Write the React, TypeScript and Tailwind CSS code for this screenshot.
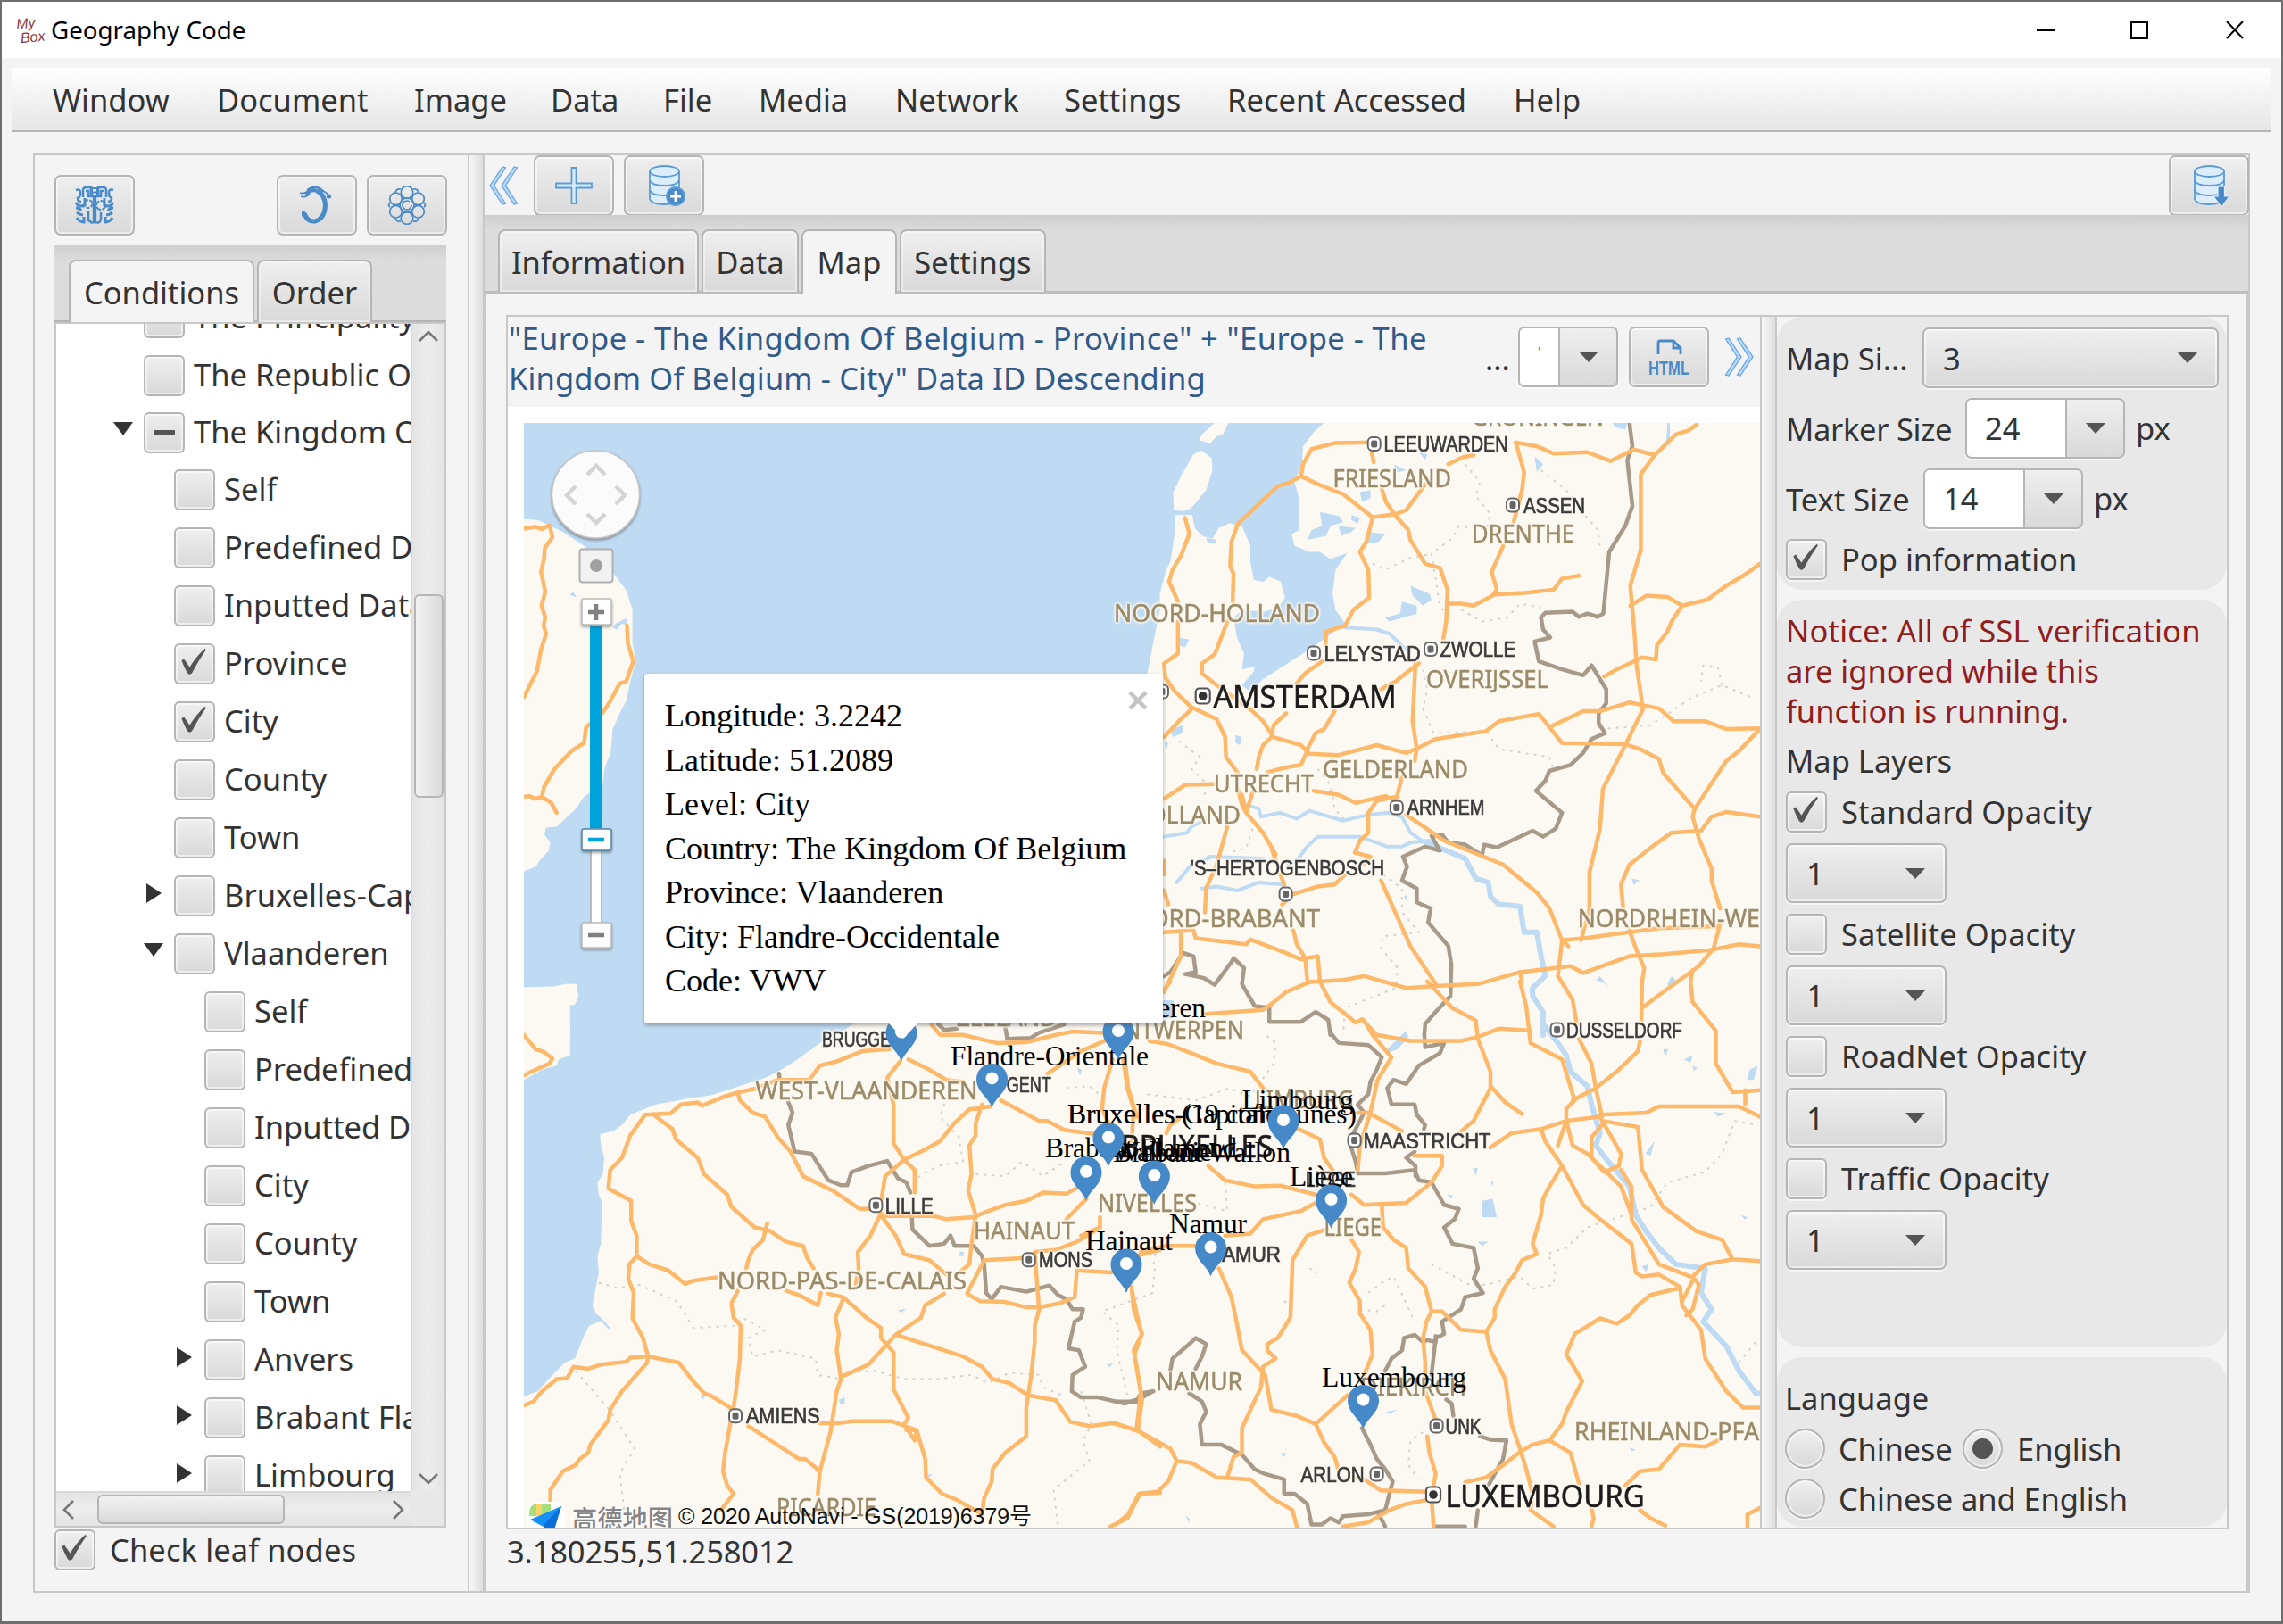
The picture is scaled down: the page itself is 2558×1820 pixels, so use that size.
import type { ReactNode } from "react";

const UI = "font-['Noto_Sans','Open_Sans',sans-serif]";
const FACE = "bg-linear-to-b from-[#efefef] to-[#d9d9d9] border-2 border-[#b5b5b5] shadow-[inset_0_0_0_2px_rgba(255,255,255,0.55),0_2px_0_rgba(255,255,255,0.6)]";

function Tick() {
  return (
    <svg viewBox="0 0 46 46" className="h-full w-full">
      <path d="M9 19 L12 17 L19 27 C25 17 31 10 38 4 L39 6 C33 14 28 23 22 34 Q19 38 16 34 Q12 27 9 19Z" transform="translate(-2 0)" fill="#555" />
    </svg>
  );
}

function Check({ state = "", className = "" }: { state?: string; className?: string }) {
  return (
    <div className={`flex h-[46px] w-[46px] shrink-0 items-center justify-center rounded-[6px] ${FACE} ${className}`}>
      {state === "on" && <Tick />}
      {state === "mixed" && <div className="h-[5px] w-[24px] bg-[#555]" />}
    </div>
  );
}

function Down() {
  return <div className="h-0 w-0 shrink-0 border-x-[11px] border-t-[12px] border-x-transparent border-t-[#555]" />;
}

function IconButton({ children, className = "" }: { children: ReactNode; className?: string }) {
  return (
    <div className={`flex h-[68px] w-[90px] shrink-0 items-center justify-center rounded-[7px] ${FACE} ${className}`}>{children}</div>
  );
}

type Row = { label: string; level: number; state?: string; arrow?: string; h?: string };
const rows: Row[] = [
  { label: "The Principality", level: 0 },
  { label: "The Republic Of", level: 0 },
  { label: "The Kingdom Of", level: 0, state: "mixed", arrow: "down", h: "h-[63px]" },
  { label: "Self", level: 1 },
  { label: "Predefined Data", level: 1 },
  { label: "Inputted Data", level: 1 },
  { label: "Province", level: 1, state: "on" },
  { label: "City", level: 1, state: "on" },
  { label: "County", level: 1 },
  { label: "Town", level: 1 },
  { label: "Bruxelles-Capitale", level: 1, arrow: "right" },
  { label: "Vlaanderen", level: 1, arrow: "down" },
  { label: "Self", level: 2 },
  { label: "Predefined Data", level: 2 },
  { label: "Inputted Data", level: 2 },
  { label: "City", level: 2 },
  { label: "County", level: 2 },
  { label: "Town", level: 2 },
  { label: "Anvers", level: 2, arrow: "right" },
  { label: "Brabant Flamand", level: 2, arrow: "right" },
  { label: "Limbourg", level: 2, arrow: "right" },
];
const pads = ["pl-[64px]", "pl-[98px]", "pl-[132px]"];

function Tree() {
  return (
    <div className="h-[1308px] w-[397px] overflow-hidden bg-white">
      <div className="-mt-[40px]">
        {rows.map((r, i) => (
          <div key={i} className={`flex items-center whitespace-nowrap ${r.h ?? "h-[65px]"} ${pads[r.level]}`}>
            <div className="w-[34px] shrink-0">
              {r.arrow === "down" && <div className="-mt-2 h-0 w-0 border-x-[11.5px] border-t-[15px] border-x-transparent border-t-[#333]" />}
              {r.arrow === "right" && <div className="-mt-1.5 ml-[3px] h-0 w-0 border-y-[11.5px] border-l-[17px] border-y-transparent border-l-[#333]" />}
            </div>
            <Check state={r.state} />
            <span className="ml-[10px]">{r.label}</span>
          </div>
        ))}
      </div>
    </div>
  );
}

function Chev({ d }: { d: string }) {
  return (
    <svg width="24" height="24" viewBox="0 0 24 24" fill="none" stroke="#777" strokeWidth="2.6">
      <path d={d} />
    </svg>
  );
}

function Tab({ children, w, active = false }: { children: string; w: string; active?: boolean }) {
  return (
    <div
      className={`flex shrink-0 items-center justify-center rounded-t-[8px] border-2 border-b-0 border-[#b5b5b5] pt-[2px] ${w} ${
        active ? "h-[73px] bg-[#f4f4f4] pb-[3px]" : "h-[70px] bg-linear-to-b from-[#efefef] to-[#d9d9d9] shadow-[inset_0_0_0_2px_rgba(255,255,255,0.4)]"
      }`}
    >
      {children}
    </div>
  );
}

function LeftPane() {
  return (
    <div className="flex w-[485px] shrink-0 flex-col pl-[22px] pt-[22px]">
      <div className="flex">
        <IconButton>
          <svg width="44" height="42" viewBox="0 0 44 42" fill="none" stroke="#4a8ac8" strokeWidth="2.6">
            <path d="M22 12V40" strokeWidth="4.4" />
            <path d="M19 2h6v9h-6zM17 40.500h10M19 6.500h6" strokeWidth="2" />
            <path d="M9 12V4q0-3 4-3h5V11h-3V5h-3M35 12V4q0-3-4-3h-5V11h3V5h3" />
            <path d="M1 4q5-2 5 3t-3 6q0 4 4 4M43 4q-5-2-5 3t3 6q0 4-4 4" />
            <path d="M1 18q3 6 10 3V13M43 18q-3 6-10 3V13M1 24q4 0 6 3M43 24q-4 0-6 3M2 29q4 3 7 3M42 29q-4 3-7 3M2 35q3 5 8 5V34M42 35q-3 5-8 5V34" strokeWidth="3" />
            <circle cx="15" cy="19.500" r="4.500" strokeWidth="2" strokeDasharray="4 1.500" />
            <circle cx="29" cy="21" r="5" strokeWidth="2" strokeDasharray="6 1.500" />
            <path d="M15 27v11q3 2 4 2M29 29v8q-1 4-4 3" />
          </svg>
        </IconButton>
        <IconButton className="ml-[159px]">
          <svg width="40" height="44" viewBox="0 0 40 44" fill="none" stroke="#4a8ac8">
            <path d="M6 31 Q9 41 18 40 Q29 37 29.500 22 Q29 10 20 6" strokeWidth="5" />
            <path d="M5 33V30" strokeWidth="4" strokeLinecap="round" />
            <path d="M20 6 Q13 3 8 10" strokeWidth="4" />
            <path d="M1 8 Q6 10 10 6 M2 12 Q8 14 12 9 M9 5 Q18 -2 26 5 L33 10 M13 3 Q20 0 27 7" strokeWidth="1.800" />
            <circle cx="33.500" cy="12" r="2.600" fill="#4a8ac8" stroke="none" />
          </svg>
        </IconButton>
        <IconButton className="ml-[11px]">
          <svg width="44" height="44" viewBox="0 0 44 44" fill="none" stroke="#4a8ac8" strokeWidth="1.700">
            <circle cx="22" cy="22" r="8" /><circle cx="22" cy="22" r="5" strokeDasharray="26 5.400" />
            <circle cx="22" cy="7.500" r="6.800" /><circle cx="34.500" cy="14.800" r="6.800" /><circle cx="34.500" cy="29.200" r="6.800" />
            <circle cx="22" cy="36.500" r="6.800" /><circle cx="9.500" cy="29.200" r="6.800" /><circle cx="9.500" cy="14.800" r="6.800" />
            <path d="M15 4 Q10 3 9 8M29 4q5-1 6 4M15 40q-5 1-6-4M29 40q5 1 6-4M3 20q-3 2 0 4M41 20q3 2 0 4" />
          </svg>
        </IconButton>
      </div>
      <div className="mt-[11px] flex h-[86px] w-[439px] gap-[3px] border-b-2 border-[#b5b5b5] bg-linear-to-b from-[#cfcfcf] to-[#dcdcdc] to-20% pl-[16px] pt-[16px]">
        <Tab w="w-[208px]" active>Conditions</Tab>
        <Tab w="w-[129px]">Order</Tab>
      </div>
      <div className="h-[1351px] w-[439px] border-2 border-[#c8c8c8]">
        <div className="flex">
          <Tree />
          <div className="flex h-[1308px] w-[38px] flex-col items-center border-l-2 border-[#dadada] bg-linear-to-r from-[#e4e4e4] via-[#ededed] to-[#e4e4e4]">
            <div className="mt-[2px]"><Chev d="M2 17 L12 7 L22 17" /></div>
            <div className="mt-[277px] h-[228px] w-[33px] rounded-[6px] border-2 border-[#b5b5b5] bg-linear-to-r from-[#f2f2f2] to-[#dadada]" />
            <div className="mt-auto mb-[2px]"><Chev d="M2 7 L12 17 L22 7" /></div>
          </div>
        </div>
        <div className="flex h-[39px]">
          <div className="flex w-[397px] items-center border-t-2 border-[#dadada] bg-linear-to-b from-[#e4e4e4] via-[#ededed] to-[#e4e4e4]">
            <div className="ml-[2px]"><Chev d="M17 2 L7 12 L17 22" /></div>
            <div className="ml-[20px] h-[33px] w-[210px] rounded-[6px] border-2 border-[#b5b5b5] bg-linear-to-b from-[#f2f2f2] to-[#dadada]" />
            <div className="ml-auto mr-[2px]"><Chev d="M7 2 L17 12 L7 22" /></div>
          </div>
          <div className="w-[38px] bg-[#e8e8e8]" />
        </div>
      </div>
      <div className="mt-[2px] flex items-center">
        <Check state="on" />
        <span className="ml-[16px] tracking-[0.100px]">Check leaf nodes</span>
      </div>
    </div>
  );
}

const Db = ({ children }: { children: ReactNode }) => (
  <svg width="44" height="48" viewBox="0 0 44 48" fill="#dcedfc" stroke="#5b9bd5" strokeWidth="1.800" className="ml-[3px]">
    <path d="M4 8 V39 Q6 45 20 45 T37 39 V8" />
    <ellipse cx="20.500" cy="8" rx="16.500" ry="6" />
    <path d="M4 18 Q6 24 20.500 24 T37 18 M4 29 Q6 35 20.500 35 T37 29" fill="none" />
    {children}
  </svg>
);

function DoubleChevron({ flip = false }: { flip?: boolean }) {
  return (
    <svg width="34" height="44" viewBox="0 0 34 44" className={flip ? "-scale-x-100" : ""} fill="#b5d8f8" stroke="#6aa6de" strokeWidth="1.300">
      <path d="M15 1 L1 22 L15 43 L18.500 42 L5.500 22 L18.500 2Z" />
      <path d="M28 1 L14 22 L28 43 L31.500 42 L18.500 22 L31.500 2Z" />
    </svg>
  );
}

const C8 = "translate(560 460) scale(0.4719 0.4464)";
const C9 = "translate(1250 460) scale(0.4719 0.4464)";
const C10 = "translate(560 1100) scale(0.4719 0.4592)";
const C11 = "translate(1250 1100) scale(0.4719 0.4592)";

const roads: [string, string][] = [
  [C8, "M57 297 L85 292 L100 298 L118 288 L125 318 L107 345 L105 372 L98 405 L108 455 L99 490 L108 520 L104 540 L110 560 L98 600 L88 655 L57 720 M302 540 L304 585 L317 630 L300 680 L285 685 L262 730 L250 750 L235 770 L205 795 L200 835 L170 855 L130 900 L105 945 L100 970 L85 975 L70 968 L57 970 M100 970 L122 985 L135 1010"],
  [C10, "M57 130 L85 165 L105 172 L125 188 L118 200 L70 222 L57 230 M57 1035 L80 1025 L100 1000 L135 970 L160 968 L175 940 L210 945 L240 935 L300 928 L310 918 L350 915 M605 262 L560 272 L530 282 L480 303 L470 295 L430 300 L405 322 L345 325 L310 375 L290 430 L262 460 L258 505 L312 535 L312 585 L325 620 L325 670 L308 690 L305 725 L318 760 L315 822 L340 870 L352 915 L350 930 L290 1000 L262 1045 L258 1070 L240 1095 L215 1130 L210 1150 L190 1165 L180 1180 L150 1195 L120 1240 L120 1270"],
  [C10, "M352 915 L425 930 L455 970 L485 1005 L500 1010 L555 1045 M365 325 L410 360 L418 385 L470 430 L485 470 L540 520 L550 550 L605 600 L640 608 L680 635 L720 645 L730 675 L745 700 M635 590 L625 630 L600 655 L590 680 L585 700 M325 670 L355 690 L400 705 L440 738 L460 730 L515 722 M565 272 L570 290 L600 320 L630 330 L660 380 L690 415 L720 475 L790 510 L855 555 L900 555 M565 755 L550 785 L555 820 L572 840 L570 920 L562 990 L555 1040 M548 1075 L535 1150 L530 1195 L540 1230 L555 1250 L525 1290 M590 1085 L710 1165 L725 1165 L760 1195 L755 1250 M760 1195 L785 1100 L800 1000 L810 970 L800 900 L805 860 L797 820 L815 775"],
  [C10, "M680 755 L710 765 L755 790 L762 760 M780 762 L815 770 L870 820 L905 845 L905 870 L935 905 L935 995 L970 1065 L960 1080 L985 1120 L990 1095 L965 1095 M990 1095 L1010 1165 L1012 1210 L1050 1250 L1085 1265 L1145 1300 M810 965 L875 935 L915 890 L940 862 L1000 820 L1010 790 L1055 762 M760 1078 L800 1078 L840 1073 L930 1073 L990 1095 M940 862 L1100 915 L1145 940 L1170 970 L1210 980 L1255 1010 L1320 1022 L1355 1075 L1400 1085 L1455 1078 L1515 1095 L1568 1135 M1282 795 L1270 840 L1270 880 L1262 960 L1250 1040 L1250 1110 L1200 1150 L1170 1190 L1168 1220 L1150 1260 L1145 1300 M905 565 L880 620 L850 660 L852 700 L845 740 M905 570 L940 620 L960 665 L1020 680 L1060 715 M905 572 L1030 572 L1060 580 L1125 575 L1160 560 L1200 545 L1250 535 L1290 515 L1345 518 L1395 490"],
  [C10, "M960 435 L915 475 L908 520 L900 560 M950 195 L920 235 L935 300 L935 395 L960 435 L985 460 L985 515 M960 435 L1010 410 L1045 390 L1080 345 L1115 312 L1165 305 M1145 300 L1130 345 L1130 375 L1115 400 L1120 470 L1112 510 L1130 570 L1120 640 L1115 690 L1085 715 M970 190 L1020 215 L1060 240 L1100 245 M925 165 L860 170 L800 195 L760 205 L735 240 L660 240 L605 262 M1190 290 L1280 340 L1300 340 L1340 362 L1410 372 M1025 105 L1045 130 L1100 130 L1180 150 L1250 148 L1320 130 L1360 122 L1435 125 M1435 145 L1380 170 L1300 225 M1455 190 L1435 260 L1430 310 L1460 380 M1480 190 L1490 260 L1505 310 L1500 400 M1393 530 L1355 570 L1345 580 M1425 575 L1425 600 L1380 620 M1270 660 L1320 655 L1370 635 L1425 600 M1270 660 L1280 795 M1150 680 L1240 675 M1110 762 L1140 780 L1200 782 L1250 795 L1282 795 L1330 785 L1365 770 L1370 705 L1452 710 M1150 680 L1110 760 M1500 745 L1505 800 L1525 860 L1505 900 L1515 960 L1525 1020 L1515 1095 M1568 1248 L1520 1250 L1490 1310 L1450 1330 M1510 670 L1568 655"],
  [C9, "M600 80 L520 82 L465 97 L445 135 L440 165 L415 180 L385 190 L340 235 L290 285 L275 330 L272 390 L280 410 L278 480 M265 530 L240 600 L235 612 L205 635 L205 660 L240 690 L325 755 L350 780 L375 820 L440 840 L460 862 L530 865 L620 840 L690 860 L712 850 L760 825 L880 805 L910 780 L1005 762 L1030 795 L1060 835 L1210 838 L1245 850 L1290 875 L1300 910 L1375 1000 L1370 1020 L1385 1075 L1415 1150 L1415 1180 L1435 1250 M440 165 L480 185 L540 210 L610 268 L665 260 L690 250 L735 185 M630 190 L642 230 L665 265 L695 300 L700 325 L735 385 L770 395 L788 450 L785 530 L778 575"],
  [C9, "M790 135 L825 117 L850 112 M608 105 L613 130 M610 270 L595 330 L580 355 L600 400 L602 470 L565 500 L545 540 L500 555 L498 590 M165 270 L175 310 L155 365 L135 400 L127 430 L148 480 M148 530 L148 610 L115 635 L118 670 L140 705 L180 745 L240 775 L260 820 L262 870 L290 910 M180 750 L150 780 L115 820 M490 630 L450 660 L430 685 M720 635 L695 655 L665 680 L630 700 M712 635 L705 780 L715 850 L710 880 M788 485 L820 485 L850 490 L900 462 L970 458 L1040 450 L1060 422 L1100 415 M920 340 L893 405 L905 450 L895 465 M950 80 L970 155 L965 200 L945 280 M950 80 L1000 90 L1040 108 L1120 105 L1175 127 L1230 98 L1280 112 L1330 60 L1360 50 L1380 35"],
  [C9, "M1280 112 L1247 160 L1247 350 L1222 440 L1232 560 L1237 640 L1252 750 L1210 840 L1157 950 L1150 1050 L1125 1160 L1125 1250 L1105 1330 M1222 490 L1260 465 L1310 468 L1345 490 L1405 475 L1450 440 L1490 415 L1530 385 M1345 490 L1320 530 L1310 555 L1285 590 L1283 625 L1250 620 L1190 650 L1160 668 M1030 795 L1110 755 L1150 755 L1220 733 L1290 748 L1325 780 L1400 780 L1450 800 L1530 798 M1530 800 L1480 855 L1450 880 L1400 960 L1375 1000 M520 755 L495 800 L475 810 L455 850 M405 760 L375 790 L370 820 L350 840 L340 870 L335 900 M455 855 L440 890 L410 895 L360 908 M115 975 L165 940 L235 938 M470 955 L530 965 L570 985 L640 968 L665 980 L680 920"],
  [C9, "M665 970 L620 980 L600 1010 L600 1060 L580 1080 L568 1110 L605 1120 L590 1140 M300 965 L310 1010 L350 1060 L380 1115 M290 950 L300 990 L310 1010 L325 960 M265 1045 L240 1140 L215 1200 L212 1260 M690 1015 L780 1080 L850 1110 L920 1140 L1000 1210 L1030 1250 L1060 1330 L1075 1345 M370 1100 L400 1190 M395 1240 L420 1215 L480 1195 L520 1190 L545 1165 M630 1180 L700 1345 L760 1440 M422 1305 L430 1340 L450 1375 L455 1430 M115 1310 L185 1305 L190 1325 L310 1340 L320 1328 L400 1360 L440 1378 L480 1370 L485 1430 M155 1310 L155 1370 L115 1460 M370 1490 L405 1460 L460 1435 L540 1430 L590 1420 L690 1450 L760 1445 L860 1440 L960 1410 L1080 1395 L1110 1412 L1220 1370 L1300 1365 L1410 1355 L1480 1340 L1530 1345"],
  [C9, "M1220 1305 L1235 1350 L1255 1400 L1250 1434 M1435 1290 L1420 1350 L1385 1395 L1300 1460 L1250 1500 M1370 1405 L1365 1434 M1060 1330 L1110 1325 L1290 1300 L1430 1295 M1060 1330 L1050 1420 L1068 1450 L1085 1480 L1095 1540 M960 1410 L965 1434 M1530 1020 L1450 1008 L1415 1020 L1390 1055 L1320 1060 L1280 1090 L1220 1140 L1200 1190 L1205 1250 M215 1515 L350 1505 L370 1490 M115 1130 L115 1165 M115 1205 L125 1240"],
  [C11, "M485 0 L510 50 L570 100 L585 92 L620 130 L700 145 L820 145 L860 135 L910 115 L985 120 M590 95 L610 130 L655 185 L622 240 L605 320 L580 400 L575 460 M740 0 L800 65 L855 95 L860 140 L890 220 L890 260 L850 340 L815 370 M895 260 L925 295 L965 323 M960 0 L975 60 L985 150 L1060 190 L1090 290 L1070 310 L1070 340 L1050 400 M80 145 L125 153 L180 175 L240 200 L320 220 L350 260 M1100 140 L1130 200 L1140 260 L1155 330 M1245 145 L1240 170 L1195 215 L1140 260 L1085 290 M1250 0 L1248 100 M1365 0 L1370 50 L1425 120 L1425 200 L1465 270 L1530 265"],
  [C11, "M1150 325 L1260 320 L1290 305 L1480 305 L1530 330 M1495 265 L1495 300 M890 405 L940 370 L1010 360 L1070 340 L1150 330 L1200 420 L1195 450 L1160 465 L1130 430 L1130 380 L1155 350 M1155 340 L1240 355 L1250 460 L1300 550 L1380 610 L1440 630 L1465 678 L1530 682 M1070 340 L1085 400 L1120 420 L1200 500 L1222 560 M1010 360 L1020 390 L1060 450 L1110 545 L1150 580 L1225 640 L1235 710 L1250 720 L1290 715 L1340 745 L1345 790 L1390 850 L1400 920 L1450 1000 L1490 1040 L1530 1040 M1200 460 L1225 500 L1225 580 L1290 690 L1365 720 M1465 678 L1400 690 L1370 720 L1385 740 L1370 800 L1355 815 M1370 730 L1345 780"],
  [C11, "M1060 450 L1030 500 L1015 530 L1010 570 L990 640 L1000 665 L965 680 L950 710 L925 745 L900 800 L900 820 L880 855 L890 900 L925 970 L940 1080 L960 1140 L975 1190 L990 1250 L985 1290 L1040 1330 M1340 748 L1270 765 L1240 790 L1220 815 L1190 835 L1150 822 L1090 860 L1070 910 L1108 975 L1070 1050 L1060 1080 L1030 1120 L990 1130 L960 1148 L920 1180 L880 1210 L830 1222 M1030 1120 L1080 1150 L1100 1225 M1340 1130 L1290 1190 L1245 1195 L1210 1230 M1340 1130 L1400 1135 L1430 1120 M1530 1285 L1500 1300 L1500 1330 M1245 1290 L1270 1310 L1305 1328 M1130 1285 L1135 1310 L1130 1330"],
  [C11, "M560 520 L590 545 L690 540 L750 490 L775 450 L775 425 L710 425 M560 630 L578 660 L570 700 L555 735 L580 780 L580 810 L605 850 L610 910 L590 960 M632 545 L635 600 L660 630 L690 650 L695 700 L735 745 L750 805 L775 805 L820 850 L880 855 M750 805 L738 830 L730 870 L735 930 L735 1000 L760 1070 M740 1110 L745 1150 L760 1200 L750 1260 L755 1330 M500 605 L455 620 L420 680 L415 820 L385 870 L360 885 L360 900 L380 920 L350 940 L345 990 L300 1090 L300 1150 L280 1160 L265 1210 M245 700 L275 770 L285 820 L300 900 L355 960 L370 1045 L430 1060 L475 1080 L550 1010 M475 1080 L495 1125 L520 1160 L530 1195"],
  [C11, "M560 1210 L590 1215 L630 1242 L740 1245 M0 1078 L60 1100 L130 1140 L145 1170 L125 1220 L100 1245 L55 1250 L30 1300 L0 1325 M145 1170 L180 1175 L240 1210 L320 1215 L370 1260 L420 1290 L430 1330 M540 1330 L600 1320 L650 1290 L690 1275 L740 1265 M40 760 L50 810 L62 860 L45 910 L60 1000 L50 1090 M60 660 L120 645 L190 645 M260 620 L320 615 L350 580 L440 560 L475 540 M220 450 L260 485 L330 500 L390 498 L475 520 M435 360 L485 385 L495 430 L515 460 M600 320 L680 365 M575 320 L605 320 M120 370 L130 350 L150 335 M22 190 L30 260 L50 330 M130 0 L112 25"],
];

const borders: [string, string][] = [
  [C9, "M1220 31 L1227 90 L1215 125 L1227 240 L1210 290 L1172 355 L1158 510 L1145 518 L1120 510 L1100 518 L1085 505 L1020 508 L1010 520 L1015 550 L1032 570 L995 580 L1005 630 L1060 650 L1110 665 L1130 640 L1165 700 L1165 735 L1147 760 L1147 785 L1162 810 L1130 825 L1110 860 L1080 890 L1030 905 L1020 930 L998 955 L1060 1010 L1045 1050 L1015 1070 L990 1055 L905 1097 L875 1090 L870 1117 L830 1090 L790 1085 L775 1065 L750 1068 L770 1105 L735 1095 L682 1120 L692 1145 L680 1180 L715 1200 L715 1235 L748 1250 L742 1285 L790 1345 L797 1390 L795 1470 L760 1510 L735 1540 L733 1568"],
  [C9, "M115 1420 L130 1410 L160 1362 L185 1370 L190 1410 L165 1415 L210 1425 L235 1442 L275 1385 L280 1375 L305 1400 L300 1440 L330 1495 L365 1500 L365 1535 L440 1535 L475 1510 L505 1530 L510 1568"],
  [C11, "M510 125 L530 150 L600 155 L632 185 L620 215 L605 245 L600 275 L575 300 L590 320 L575 350 L555 390 L570 440 L575 468 L640 468 L710 460 L720 485 L750 490 L780 545 L815 555 L805 580 L780 600 L800 640 L850 650 L860 700 L850 725 L872 760 L830 770 L820 800 L775 830 L780 860 L760 870 L750 960 M733 130 L735 160 L780 150 L770 175 L720 205 L690 250 L660 240 L645 260 L655 300 L710 300 L715 325 L735 350 L732 360 M710 415 L690 430 L712 450 L712 475"],
  [C11, "M760 865 L760 880 L740 875 L730 880 L710 862 L685 870 L680 900 L655 920 L640 950 M785 1020 L798 1030 L802 1060 M865 1110 L890 1118 L928 1120 L920 1165 L885 1230 M585 1090 L605 1130 L620 1165 L640 1190 L658 1220 L640 1290 L600 1300 L540 1305 L530 1320 L510 1310 L490 1325 L465 1325 L455 1275 L425 1250 L400 1250 L400 1215 L350 1200 L330 1190 L300 1155 L250 1130 L205 1130 L200 1080 L215 1050 L205 1025 L175 1005 M0 1025 L50 1025 L60 1005 L90 1000 M130 950 L135 920 L180 880 L190 870 L215 885 L205 915 L190 945 M625 1300 L640 1330 M860 1290 L855 1330 M760 1330 L830 1330"],
  [C10, "M663 225 L665 240 M685 295 L695 320 L685 350 L700 415 L740 420 L780 485 L810 497 L825 497 L835 465 L875 450 L920 438 L945 480 L965 490 L975 515 M978 570 L980 605 L1020 645 L1055 640 L1070 620 L1080 645 L1125 645 L1145 670 L1150 690 L1155 760 L1168 775 L1190 745 L1250 757 L1305 742 L1325 765 L1345 775 L1360 800 L1385 800 L1380 820 L1365 830 L1350 895 L1375 900 L1390 940 L1360 960 L1358 1000 L1380 1015 L1420 1015 L1485 1030 L1520 1018 L1550 1000 M1040 103 L1055 118 L1085 115 M1200 110 L1205 140 L1260 138 L1280 125 L1340 105"],
];

const rivers: [string, string, number][] = [
  [C9, "M310 990 L340 1000 L345 1020 L390 1010 L430 1025 L460 1005 L540 1030 L600 1015 L650 1010 L680 1020 L700 1060 L735 1085 M115 1070 L170 1060 L180 1045 L220 1025 M745 1080 L700 1085 L680 1095 L645 1095 L620 1085 L580 1070 L480 1070 L455 1095 L430 1130 L410 1140 M220 1120 L350 1125 M205 1200 L240 1195 L290 1205 L340 1185 L400 1190 M145 1185 L180 1140 L230 1120 M545 545 L620 550 L650 560 L690 600", 4],
  [C9, "M740 1085 L830 1125 L855 1175 L885 1185 L890 1220 L910 1240 L960 1245 L970 1310 L1000 1310 L1010 1370 L1020 1420 L990 1450 L990 1470 L1015 1510 L1015 1568", 6],
  [C11, "M1020 110 L1050 150 L1070 180 L1080 220 L1120 255 L1130 300 L1150 370 L1140 400 L1170 440 L1220 500 L1235 570 L1260 610 L1290 650 L1330 690 L1400 700 L1390 760 L1415 800 L1395 830 L1450 890 L1480 950 L1520 1005 L1530 1005", 6],
];

const lakes: [string, string][] = [
  [C9, "M485 255 L530 265 L540 280 L510 290 L500 315 L455 325 L465 300 L490 290Z M530 290 L570 295 L560 305 L535 315Z M580 205 L605 200 L605 220 L585 230Z M600 305 L640 310 L625 330 L595 335Z M560 262 L580 270 L575 285 L560 275Z M215 320 L240 325 L235 335 L218 332Z M150 570 L175 575 L165 595 L152 590Z M130 800 L160 790 L160 810 L135 820Z M285 815 L300 820 L295 840 L285 835Z M680 480 L715 490 L715 510 L650 530 L640 520 L675 510Z M700 440 L745 460 L750 475 L730 490 L705 465Z M995 115 L1015 135 L1000 155Z M660 135 L690 150 L670 155Z M1225 1175 L1245 1180 L1230 1190Z M1180 31 L1215 31 L1210 48 L1185 42Z M1310 31 L1316 31 L1316 90 L1307 80Z M1140 1430 L1150 1420 L1170 1445 L1155 1435Z M1310 1440 L1320 1420 L1330 1430 L1315 1450Z M720 105 L740 110 L735 125Z M115 830 L125 835 L120 855Z M685 1220 L690 1215 L692 1235Z"],
  [C11, "M640 170 L690 120 L695 135 L670 165 L645 175Z M1300 165 L1312 165 L1305 185Z M1350 190 L1370 180 L1365 198Z M1370 205 L1382 212 L1372 218Z M1505 215 L1525 205 L1515 240 L1500 240Z M1275 395 L1280 390 L1270 425 L1258 420Z M870 535 L895 530 L905 575 L870 575Z M848 455 L860 455 L855 475Z M890 488 L898 490 L895 498Z M860 635 L885 635 L870 645Z M1250 695 L1265 690 L1260 710Z M1485 570 L1500 575 L1495 582Z M640 1050 L670 1045 L650 1055Z M390 1152 L405 1150 L400 1160Z M165 1303 L175 1310 L175 1320Z M1220 1138 L1235 1142 L1225 1147Z M1420 318 L1450 322 L1430 330Z M788 520 L802 522 L795 530Z"],
  [C10, "M805 1020 L820 1015 L818 1030 L808 1030Z M945 803 L965 798 L955 808Z M1092 660 L1102 660 L1100 670 L1092 670Z M1015 1203 L1027 1203 L1020 1210Z M1440 935 L1455 932 L1448 942Z M475 1012 L488 1012 L482 1020Z M1370 210 L1382 215 L1378 230Z"],
  [C8, "M165 463 L175 456 L182 468Z M268 545 L275 535 L300 522 L305 540 L290 535 L278 550Z"],
];

const dashes: [string, string][] = [
  [C9, "M830 135 L865 180 L855 215 L890 260 L880 300 L815 290 L800 320 L750 360 L770 490 L790 520 M610 385 L640 400 L700 370 L750 360 M1010 150 L1070 200 L1120 270 L1145 300 L1150 340 M820 500 L870 530 L930 520 L960 485 L1010 495 M730 650 L740 700 L730 750 L755 810 L880 805 L910 850 L1030 870 L1040 905 M480 900 L510 940 L520 1000 L545 1030 M150 830 L200 870 L180 900 L220 940 L205 980 M325 1050 L310 1100 L265 1110 M635 1165 L680 1200 L680 1260 L720 1310 L635 1320 L630 1350 L670 1400 L665 1450 L545 1500 L540 1568 M1150 800 L1270 790 L1320 755 L1370 720 L1440 690 L1510 720 M1440 690 L1430 645 L1395 640 L1390 680"],
  [C10, "M235 735 L280 748 L330 740 L420 780 L460 845 L560 840 L575 820 L630 850 L590 870 L600 915 L660 900 L750 920 L755 960 L810 970 M180 950 L260 1045 L320 1140 L285 1200 L295 1290 M830 955 L890 950 L960 970 L1040 970 L1120 960 L1160 980 L1210 955 L1280 960 L1290 990 L1335 1010 M1045 240 L1055 300 L1045 330 L1090 380 L1100 440 L1040 450 L990 480 M1380 1000 L1405 1080 L1385 1120 L1400 1170 L1315 1240 L1325 1330 M1130 470 L1200 475 L1240 440 L1290 475 L1340 440 M1555 700 L1550 760 L1430 805 L1470 840 L1465 900 L1490 1010 M1345 260 L1400 255 L1440 290"],
  [C11, "M75 275 L190 290 L270 260 L320 280 L375 200 L380 150 L350 125 M260 490 L265 560 L190 540 M90 690 L100 630 M400 780 L430 800 M460 700 L480 710 M600 760 L640 730 L660 720 L710 830 M580 800 L620 805 L640 790 M750 690 L840 740 L880 740 L960 720 L990 750 L1040 740 L1045 700 L1025 665 L1070 650 L1120 600 L1175 580 M1180 580 L1270 550 L1310 490 L1400 465 L1440 420 L1470 340 L1520 350 M730 1100 L700 1120 L695 1180 L720 1215 M1520 880 L1480 930"],
];

type L = [string, number, number, number];
const regions: L[] = [
  ["GRONINGEN", 1649, 477, 148], ["FRIESLAND", 1493.500, 546, 132.500], ["DRENTHE", 1649, 608, 115],
  ["NOORD-HOLLAND", 1248, 696.600, 231], ["OVERIJSSEL", 1598, 771, 137], ["GELDERLAND", 1482, 871.600, 163],
  ["UTRECHT", 1360, 887.700, 112], ["ZUID-HOLLAND", 1196, 923, 194], ["NOORD-BRABANT", 1246, 1038.500, 233],
  ["NORDRHEIN-WE", 1767.700, 1038.500, 204], ["ANTWERPEN", 1243, 1164, 151], ["LIMBURG", 1405.700, 1242, 111],
  ["LIEGE", 1483.600, 1385, 64.500], ["NIVELLES", 1230, 1358, 111], ["NAMUR", 1295, 1558, 97], ["DIEKIRCH", 1524, 1564, 119],
  ["RHEINLAND-PFA", 1764, 1614, 207], ["ZEELAND", 1072, 1150, 112], ["WEST-VLAANDEREN", 846.400, 1232, 249],
  ["HAINAUT", 1091, 1389, 113], ["NORD-PAS-DE-CALAIS", 804, 1445, 279], ["PICARDIE", 870, 1699, 112],
];
const cities: L[] = [
  ["LEEUWARDEN", 1550.600, 506, 139], ["ASSEN", 1707, 575, 69], ["LELYSTAD", 1483.600, 741, 108], ["ZWOLLE", 1613.400, 736, 85],
  ["ARNHEM", 1576.600, 913, 87], ["'S–HERTOGENBOSCH", 1334, 981, 217], ["DUSSELDORF", 1755, 1162.500, 130],
  ["MAASTRICHT", 1527.500, 1287, 143], ["LIEGE", 1463, 1330, 56], ["NAMUR", 1353, 1413.600, 82], ["UNK", 1619.500, 1606.500, 40],
  ["ARLON", 1457.600, 1661, 71], ["BRUGGE", 921, 1172.500, 77], ["GENT", 1127.700, 1224, 50], ["LILLE", 991.800, 1360, 54],
  ["MONS", 1164, 1420, 60], ["AMIENS", 836, 1595, 82.600],
];
const capitals: L[] = [
  ["AMSTERDAM", 1359.500, 792.600, 205], ["BRUXELLES", 1256, 1297, 170], ["LUXEMBOURG", 1619.500, 1689, 223],
];
const dots: [number, number][] = [
  [1539.7, 497.5], [1695, 566], [1472, 732], [1603, 727.4], [1564.8, 905], [1440.6, 1002], [1744.6, 1154], [1517.6, 1278],
  [1609.6, 1598], [1542.6, 1652], [981.4, 1350.7], [1152.7, 1411.8], [824, 1586.8], [1302, 775],
];
const pins: [number, number][] = [
  [1010, 1189.5], [1253, 1188], [1111.5, 1241.4], [1438, 1288], [1242, 1307.6], [1217, 1345.7], [1293.4, 1350], [1491.6, 1377],
  [1356.6, 1430.6], [1262, 1449], [1527.5, 1601.5],
];
const pinLabels: L[] = [
  ["Vlaanderen", 1207, 1140, 144], ["Flandre-Orientale", 1065, 1194, 222], ["Bruxelles-Capitale", 1196, 1259, 236],
  ["Bruxelles (19 communes)", 1196, 1259, 324], ["Brabant Flamand", 1171, 1297, 215], ["Wallonie", 1247, 1301, 111],
  ["Brabant Wallon", 1247, 1302, 199], ["Limbourg", 1391.6, 1243, 125], ["Liège", 1445, 1329, 71], ["Namur", 1310, 1382, 87],
  ["Hainaut", 1216, 1401, 98], ["Luxembourg", 1481, 1554, 162],
];

function Labels({ items, size, fill, font, bold }: { items: L[]; size: number; fill: string; font: string; bold: number }) {
  return (
    <g fontSize={size} fill={fill} stroke={fill} strokeWidth={bold} fontFamily={font} className="[filter:drop-shadow(0_0_1px_#fcf9f2)_drop-shadow(0_0_1px_#fcf9f2)_drop-shadow(0_0_1px_#fcf9f2)]">
      {items.map(([t, x, y, w], i) => (
        <text key={i} x={x} y={y} textLength={w} lengthAdjust="spacingAndGlyphs">{t}</text>
      ))}
    </g>
  );
}

const Lines = ({ items, stroke, width, dash }: { items: [string, string][]; stroke: string; width: number; dash?: string }) => (
  <g fill="none" stroke={stroke} strokeWidth={width} strokeLinejoin="round" strokeLinecap={dash ? "butt" : "round"} strokeDasharray={dash}>
    {items.map(([t, d], i) => (
      <path key={i} transform={t} d={d} vectorEffect="non-scaling-stroke" />
    ))}
  </g>
);

function MapDrawing() {
  return (
    <svg width="1385" height="1238" viewBox="587 474 1385 1238" className="block">
      <rect x="587" y="474" width="1385" height="1238" fill="#bfdbf3" />
      <g fill="#fcf9f2">
        <path transform={C8} d="M57 273 L90 275 L110 285 L150 305 L200 340 L240 380 L270 410 L300 450 L315 500 L315 585 L323 625 L310 680 L300 730 L285 760 L268 800 L263 860 L248 900 L245 935 L200 970 L180 1000 L155 1025 L135 1045 L110 1047 L106 1065 L120 1085 L116 1105 L95 1130 L85 1145 L57 1157Z M57 1448 L130 1446 L155 1440 L182 1440 L187 1470 L178 1492 L155 1495 L160 1520 L167 1550 L167 1568 L57 1600Z" />
        <path transform={C10} d="M57 20 L167 60 L167 180 L140 190 L135 205 L100 215 L57 240Z" />
        <path transform={C10} d="M870 90 L840 103 L800 130 L760 150 L700 195 L660 220 L630 235 L560 258 L500 278 L450 285 L370 300 L310 325 L290 350 L270 365 L238 373 L240 400 L248 430 L245 470 L232 490 L235 520 L243 540 L240 640 L232 670 L235 710 L220 790 L228 810 L240 820 L262 845 L258 848 L240 828 L212 840 L198 870 L190 890 L178 920 L155 930 L130 955 L90 1000 L57 1012 L57 1400 L3100 1400 L3100 0 L1600 0 L1600 90Z" />
        <path transform={C9} d="M75 1480 L75 660 L90 580 L105 500 L105 460 L120 400 L130 380 L140 310 L142 262 L182 262 L188 295 L205 315 L230 322 L245 295 L270 283 L300 290 L320 340 L320 380 L328 425 L350 430 L365 418 L392 430 L402 470 L385 497 L350 505 L300 500 L280 520 L288 570 L305 610 L300 650 L330 642 L328 655 L300 690 L318 705 L350 675 L460 600 L500 570 L545 535 L522 500 L515 460 L522 400 L550 358 L510 373 L485 355 L460 355 L425 340 L418 310 L437 300 L435 270 L437 225 L425 180 L443 130 L445 90 L470 55 L495 31 L1600 31 L1600 1500Z" />
        <path transform={C9} d="M205 100 L228 120 L230 150 L215 200 L180 245 L160 253 L138 250 L137 205 L155 165 L185 110Z M235 31 L268 31 L255 60 L240 65 L225 82 L198 75 L205 60Z" />
      </g>
      <g fill="#bfdbf3">
        {lakes.map(([t, d], i) => <path key={i} transform={t} d={d} />)}
      </g>
      <Lines items={dashes} stroke="#d6d3cc" width={2} dash="3 6" />
      {rivers.map(([t, d, w], i) => <Lines key={i} items={[[t, d]]} stroke="#bfdbf3" width={w} />)}
      <Lines items={borders} stroke="#a89a88" width={4.5} />
      <Lines items={roads} stroke="#fdb869" width={4.5} />
      <Labels items={regions} size={26.5} fill="#9b8b69" font="Noto Sans, Open Sans, sans-serif" bold={0.5} />
      <Labels items={cities} size={23} fill="#3a3a3a" font="Liberation Sans, Arial, sans-serif" bold={0.7} />
      <Labels items={capitals} size={34} fill="#1c1c1c" font="Noto Sans, Open Sans, sans-serif" bold={0.6} />
      {dots.map(([x, y], i) => (
        <g key={i} transform={`translate(${x} ${y})`}>
          <rect x="-7" y="-7.500" width="14" height="15" rx="5" fill="#fff" stroke="#666" strokeWidth="2" />
          <rect x="-3.500" y="-4" width="7" height="8" rx="2" fill="#666" />
        </g>
      ))}
      {[[1347.7, 780], [1606, 1675]].map(([x, y]) => (
        <g key={x} transform={`translate(${x} ${y})`}>
          <rect x="-8" y="-8.500" width="16" height="17" rx="4" fill="#fff" stroke="#555" strokeWidth="2.200" />
          <circle r="4.800" fill="#333" />
        </g>
      ))}
      {pinLabels.map(([t, x, y, w], i) => (
        <text key={i} x={x} y={y} textLength={w} fontSize="31.500" fontFamily="Liberation Serif, Times New Roman, serif" fill="#000">{t}</text>
      ))}
      {pins.map(([x, y], i) => (
        <g key={i} transform={`translate(${x} ${y})`}>
          <path d="M0 0 C-4 -12 -17.500 -18 -17.500 -32 A17.500 17.500 0 0 1 17.500 -32 C17.500 -18 4 -12 0 0Z" fill="#4689c8" />
          <circle cy="-33" r="7" fill="#fff" />
        </g>
      ))}
      <g transform="translate(591 1683)">
        <rect width="42" height="34" rx="9" fill="#fff" />
        <path d="M2 14 Q2 2 12 2 H26 V16 H2Z" fill="#a5e07a" />
        <path d="M10 2 h6 v14 h-6z" fill="#fbd26a" />
        <path d="M3 20 L38 5 L29 34Z" fill="#1590f5" />
        <path d="M38 5 L18 26 L20 34 L29 34Z" fill="#0a6fd6" />
      </g>
      <text x="641" y="1713" textLength="113" lengthAdjust="spacingAndGlyphs" fontSize="28" fontWeight="500" fontFamily="Noto Sans CJK SC, sans-serif" fill="#858585" stroke="#fff" strokeWidth="2.500" paintOrder="stroke">高德地图</text>
      <text x="760" y="1708" textLength="396" fontSize="25" fontFamily="Liberation Sans, Noto Sans CJK SC, sans-serif" fill="#111">© 2020 AutoNavi - GS(2019)6379号</text>
    </svg>
  );
}

function ZoomControl() {
  return (
    <svg width="110" height="610" viewBox="610 500 110 610" className="absolute left-[23px] top-[26px]">
      <defs>
        <filter id="soft" x="-20%" y="-20%" width="140%" height="150%">
          <feDropShadow dx="0" dy="2" stdDeviation="1.800" floodColor="#555" floodOpacity="0.600" />
        </filter>
      </defs>
      <circle cx="667.500" cy="554" r="49" fill="#fbfbfb" stroke="#c4c4c4" strokeWidth="1.500" filter="url(#soft)" />
      <g fill="none" stroke="#d4d4d4" strokeWidth="4.500">
        <path d="M658 532 L668 522 L678 532 M658 576 L668 586 L678 576 M645 545 L635 555 L645 565 M690 545 L700 555 L690 565" />
      </g>
      <rect x="649.500" y="615.500" width="37" height="37" rx="3" fill="#f2f2f2" stroke="#b0b0b0" strokeWidth="2" />
      <circle cx="668" cy="634" r="7" fill="#a0a0a0" />
      <rect x="662" y="940" width="12" height="100" fill="#fff" stroke="#aaa" strokeWidth="1.500" />
      <rect x="661" y="700" width="14" height="228" fill="#00a2dc" />
      <g filter="url(#soft)" fill="#fdfdfd" stroke="#bbb" strokeWidth="1.500">
        <rect x="652" y="671" width="33" height="29" rx="2" />
        <rect x="652" y="929" width="33" height="24" rx="2" stroke="#4d87a5" />
        <rect x="652" y="1034" width="33" height="28" rx="2" />
      </g>
      <path d="M659 686 H677 M668 677 V695 M659 1048 H677" stroke="#808080" strokeWidth="4.500" />
      <path d="M659 941 H677" stroke="#00a2dc" strokeWidth="4.500" />
    </svg>
  );
}

const info = [
  "Longitude: 3.2242", "Latitude: 51.2089", "Level: City", "Country: The Kingdom Of Belgium",
  "Province: Vlaanderen", "City: Flandre-Occidentale", "Code: VWV",
];

function MapView() {
  return (
    <div className="relative ml-[18px] mt-[18px] h-[1238px] w-[1385px]">
      <MapDrawing />
      <ZoomControl />
      <div className="absolute left-[135px] top-[281px] h-[392px] w-[581px] rounded-[4px] bg-white pl-[23px] pt-[23px] font-['Liberation_Serif',serif] text-[36px] leading-[49.500px] text-black shadow-[0_2px_4px_rgba(80,80,80,0.500)]">
        {info.map((t) => <div key={t} className="whitespace-nowrap">{t}</div>)}
      </div>
      <svg width="40" height="20" viewBox="0 0 40 20" className="absolute left-[405px] top-[672px]"><path d="M3 0 H37 L20 18Z" fill="#fff" /></svg>
      <svg width="22" height="22" viewBox="0 0 22 22" className="absolute left-[677px] top-[300px]"><path d="M2 2 L20 20 M20 2 L2 20" stroke="#c4c4c4" strokeWidth="4.500" /></svg>
    </div>
  );
}

function Combo({ value, w, fw, className = "" }: { value: ReactNode; w: string; fw: string; className?: string }) {
  return (
    <div className={`flex h-[68px] shrink-0 overflow-hidden rounded-[7px] border-2 border-[#b5b5b5] bg-linear-to-b from-[#efefef] to-[#d9d9d9] shadow-[0_2px_0_rgba(255,255,255,0.600)] ${w} ${className}`}>
      <div className={`flex items-center border-r-2 border-[#b5b5b5] bg-white pl-[20px] ${fw}`}>{value}</div>
      <div className="flex flex-1 items-center justify-center"><Down /></div>
    </div>
  );
}

function Select({ value, className = "" }: { value: string; className?: string }) {
  return (
    <div className={`flex h-[67px] shrink-0 items-center justify-between rounded-[7px] pl-[21px] pr-[22px] ${FACE} ${className}`}>
      <span className="pt-[2px]">{value}</span>
      <Down />
    </div>
  );
}

function Radio({ on = false }: { on?: boolean }) {
  return (
    <div className={`flex h-[45px] w-[45px] shrink-0 items-center justify-center rounded-full ${FACE}`}>
      {on && <div className="h-[23px] w-[23px] rounded-full bg-[#555]" />}
    </div>
  );
}

function SidePanel() {
  return (
    <div className="flex w-[504px] shrink-0 flex-col">
      <div className="h-[306px] rounded-[28px] bg-[#e8e8e8] pl-[10px] pt-[12px]">
        <div className="flex h-[68px] items-center"><span className="w-[153px] pt-[2px]">Map Si...</span><Select value="3" className="h-[68px]! w-[332px]" /></div>
        <div className="mt-[11px] flex h-[68px] items-center"><span className="w-[201px] whitespace-nowrap pt-[2px] tracking-[-0.300px]">Marker Size</span><Combo value="24" w="w-[179px]" fw="w-[112px]" /><span className="ml-[12px]">px</span></div>
        <div className="mt-[11px] flex h-[68px] items-center"><span className="w-[154px] whitespace-nowrap pt-[2px]">Text Size</span><Combo value="14" w="w-[179px]" fw="w-[112px]" /><span className="ml-[12px]">px</span></div>
        <div className="mt-[11px] flex items-center"><Check state="on" /><span className="ml-[16px]">Pop information</span></div>
      </div>
      <div className="mt-[11px] h-[838px] rounded-[28px] bg-[#e8e8e8] pl-[10px] pt-[12px]">
        <div className="leading-[45px] whitespace-nowrap text-[#921d1d]"><span className="tracking-[0.200px]">Notice: All of SSL verification</span><br />are ignored while this<br />function is running.</div>
        <div className="mt-[11px] leading-[45px]">Map Layers</div>
        {["Standard Opacity", "Satellite Opacity", "RoadNet Opacity", "Traffic Opacity"].map((t, i) => (
          <div key={t} className="pt-[11px]">
            <div className="flex h-[47px] items-center"><Check state={i ? "" : "on"} /><span className="ml-[16px] pt-[1px] tracking-[0.100px]">{t}</span></div>
            <Select value="1" className="mt-[12px] w-[180px]" />
          </div>
        ))}
      </div>
      <div className="mt-[11px] h-[190px] rounded-[28px] bg-[#e8e8e8] pl-[9px] pt-[23px]">
        <div className="leading-[46px]">Language</div>
        <div className="mt-[11px] flex items-center"><Radio /><span className="ml-[15px] w-[139px] pt-[1px] tracking-[-0.200px]">Chinese</span><Radio on /><span className="ml-[16px] pt-[1px]">English</span></div>
        <div className="mt-[11px] flex items-center"><Radio /><span className="ml-[15px] whitespace-nowrap pt-[1px] tracking-[-0.100px]">Chinese and English</span></div>
      </div>
    </div>
  );
}

function MapTab() {
  return (
    <div className="ml-[22px] mt-[23px] flex h-[1361px] w-[1930px] border-2 border-[#c8c8c8]">
      <div className="w-[1403px] shrink-0 bg-white">
        <div className="flex h-[101px] w-[1403px] items-start bg-[#f4f4f4]">
          <div className="mt-[1px] w-[1095px] pl-px leading-[45px] whitespace-nowrap text-[#315a8a]">
            <span className="tracking-[0.420px]">"Europe - The Kingdom Of Belgium - Province" + "Europe - The</span><br />
            <span className="tracking-[0.130px]">Kingdom Of Belgium - City" Data ID Descending</span>
          </div>
          <span className="mt-[30px] w-[37px]">...</span>
          <div className="mt-[11px] flex">
            <Combo value={<span className="pb-[14px] text-[15px] text-[#996644]">'</span>} w="w-[112px]" fw="w-[45px]" />
            <IconButton className="ml-[12px]">
              <svg width="48" height="48" viewBox="0 0 48 48" fill="none" stroke="#4a8ac8" strokeWidth="2.800">
                <path d="M12 21 V8 Q12 6 14 6 H29 L37 14 V21 M29 6 V14 H37" />
                <text x="1" y="44" textLength="46" lengthAdjust="spacingAndGlyphs" fontSize="22.500" fontWeight="700" fontFamily="Liberation Sans, sans-serif" fill="#4a8ac8" stroke="none">HTML</text>
              </svg>
            </IconButton>
            <div className="ml-[16px] mt-[12px]"><DoubleChevron flip /></div>
          </div>
        </div>
        <MapView />
      </div>
      <div className="w-[19px] shrink-0 border-x-2 border-[#c8c8c8] bg-linear-to-r from-[#f8f8f8] to-[#dedede]" />
      <SidePanel />
    </div>
  );
}

function RightPane() {
  return (
    <div className="flex min-w-0 flex-1 flex-col">
      <div className="flex h-[67px] shrink-0 items-start">
        <div className="ml-[5px] mt-[12px] w-[50px]"><DoubleChevron /></div>
        <IconButton>
          <svg width="44" height="44" viewBox="0 0 44 44" fill="#dcedfc" stroke="#5b9bd5" strokeWidth="1.800"><path d="M19.500 2 H24.500 V19.500 H42 V24.500 H24.500 V42 H19.500 V24.500 H2 V19.500 H19.500Z" /></svg>
        </IconButton>
        <IconButton className="ml-[11px]">
          <Db><circle cx="33" cy="36" r="10" fill="#4a8ac8" /><path d="M27 36 H39 M33 30 V42" stroke="#fff" strokeWidth="2.800" /></Db>
        </IconButton>
        <IconButton className="ml-auto -mr-px">
          <Db><path d="M30 25 H37.500 V36 H43 L34 48 L25 36 H30Z" fill="#4a8ac8" stroke="#e3f0fb" strokeWidth="1.200" /></Db>
        </IconButton>
      </div>
      <div className="flex h-[89px] shrink-0 gap-[3px] border-b-4 border-[#bdbdbd] bg-linear-to-b from-[#cfcfcf] to-[#dcdcdc] to-20% pl-[15px] pt-[16px]">
        <Tab w="w-[225px]">Information</Tab>
        <Tab w="w-[109px]">Data</Tab>
        <Tab w="w-[107px]" active>Map</Tab>
        <Tab w="w-[164px]">Settings</Tab>
      </div>
      <div className="flex-1 border-r-2 border-l-2 border-[#c8c8c8]">
        <MapTab />
        <div className="ml-[23px] leading-[50px] tracking-[-0.150px]">3.180255,51.258012</div>
      </div>
    </div>
  );
}

export default function App() {
  return (
    <div className={`flex h-[1820px] w-[2558px] flex-col overflow-hidden border-2 border-b-[3px] border-[#6f6d6f] bg-[#f4f4f4] text-[34.500px] leading-none text-[#333] ${UI}`}>
      <div className="flex h-[63px] shrink-0 items-center bg-white text-black">
        <div className="ml-[17px] w-[32px] -rotate-6 font-['Liberation_Sans',sans-serif] text-[16px] leading-[16px] italic text-[#8e3b40]">My<br /><span className="ml-[3px]">Box</span></div>
        <span className="ml-[6px] text-[27.700px]">Geography Code</span>
        <svg width="240" height="30" viewBox="2280 17 240 30" className="ml-auto mr-[36px]" fill="none" stroke="#000" strokeWidth="2">
          <path d="M2282 32 H2302 M2495 22 L2513 41 M2513 22 L2495 41" />
          <rect x="2388" y="23" width="18" height="18" />
        </svg>
      </div>
      <div className="mx-[11px] mt-[11px] flex h-[72px] shrink-0 items-center border-b-2 border-[#b5b5b5] bg-linear-to-b from-white to-[#e6e6e6] pl-[46px] pt-[2px] whitespace-nowrap">
        {[
          ["Window", "w-[184px]"], ["Document", "w-[221px]"], ["Image", "w-[153px]"], ["Data", "w-[126px]"], ["File", "w-[107px]"],
          ["Media", "w-[153px]"], ["Network", "w-[189px]"], ["Settings", "w-[183px]"], ["Recent Accessed", "w-[321px]"], ["Help", "w-[90px]"],
        ].map(([t, w]) => <div key={t} className={w}>{t}</div>)}
      </div>
      <div className="ml-[35px] mt-[24px] flex h-[1613px] w-[2484px] shrink-0 border-2 border-[#c8c8c8]">
        <LeftPane />
        <div className="w-[19px] shrink-0 border-x-2 border-[#c8c8c8] bg-linear-to-r from-[#f8f8f8] to-[#dedede]" />
        <RightPane />
      </div>
    </div>
  );
}
